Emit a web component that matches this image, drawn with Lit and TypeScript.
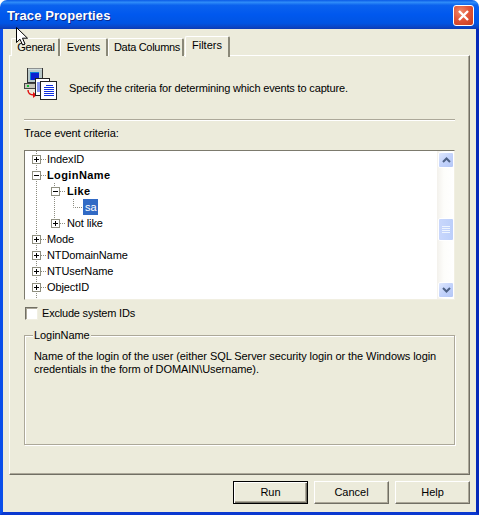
import { LitElement, html, css, svg } from "lit";
import { customElement } from "lit/decorators.js";

const FONT = css`"Liberation Sans", Arial, sans-serif`;

interface Row { depth: number; exp?: "+" | "-"; label: string; bold?: boolean; selected?: boolean; }
const ROWS: Row[] = [
  { depth: 0, exp: "+", label: "IndexID" },
  { depth: 0, exp: "-", label: "LoginName", bold: true },
  { depth: 1, exp: "-", label: "Like", bold: true },
  { depth: 2, label: "sa", selected: true },
  { depth: 1, exp: "+", label: "Not like" },
  { depth: 0, exp: "+", label: "Mode" },
  { depth: 0, exp: "+", label: "NTDomainName" },
  { depth: 0, exp: "+", label: "NTUserName" },
  { depth: 0, exp: "+", label: "ObjectID" },
];

@customElement("app-root")
export class AppRoot extends LitElement {
  static styles = css`
    :host { display: block; width: 479px; height: 515px; position: relative; overflow: hidden;
      font: 11px/13px ${FONT}; color: #000; }
    .win { width: 479px; height: 515px; display: flex; flex-direction: column; box-sizing: border-box; position: relative; }
    .title { height: 29px; flex: none; display: flex; align-items: center; justify-content: space-between;
      padding: 1px 7px 0 7px; box-sizing: border-box;
      background: linear-gradient(180deg,#0a5ae6 0,#2f8cf8 8%,#0b62ee 18%,#0058ee 50%,#0054e3 80%,#0a47c8 92%,#0b3bb5 100%);
      border-radius: 7px 7px 0 0; }
    .title span { color: #fff; font: bold 13px/16px ${FONT}; text-shadow: 1px 1px 0 #0a2a90; letter-spacing: .1px; margin-top: 2px; }
    .close { width: 21px; height: 21px; box-sizing: border-box; border: 1px solid #fff; border-radius: 3px;
      margin-right: -2px; display: flex; align-items: center; justify-content: center;
      background: radial-gradient(circle at 35% 30%, #f08a6a 0, #e2563a 45%, #c83a1c 100%); }
    .frame { flex: 1; min-height: 0; background: #ecebdb; padding: 7px 6px 0 6px;
      border-style: solid; border-width: 0 3px 3px 3px; border-color: #0a4eea #0428b8 #0a38d0 #0a4eea;
      display: flex; flex-direction: column; box-sizing: border-box; }
    .tabs { display: flex; align-items: flex-end; height: 20px; flex: none; padding-left: 2px; position: relative; z-index: 1; margin-bottom: -1px; }
    .tab { box-sizing: border-box; height: 18px; background: #ecebdb; display: flex; align-items: center; justify-content: center;
      border-top: 1px solid #fff; border-left: 1px solid #fff; border-right: 2px solid #8a8878; border-radius: 2px 2px 0 0; padding-bottom: 1px; }
    .tab.on { height: 21px; margin-left: 1px; margin-bottom: -1px; padding-bottom: 4px; }
    .t1 { width: 49px; letter-spacing: -.25px; padding-left: 2px; } .t2 { width: 48px; } .t3 { width: 76px; letter-spacing: -.3px; padding-left: 3px; } .t4 { width: 45px; }
    .panel { box-sizing: border-box; width: 461px; height: 420px; flex: none; border: 1px solid; border-color: #fff #716f64 #716f64 #fff;
      box-shadow: inset -1px -1px 0 #aca899; padding: 0 14px 0 14px; display: flex; flex-direction: column; }
    .head { height: 63px; flex: none; display: flex; align-items: center; gap: 11px; padding: 2px 0 0 0; box-sizing: border-box; }
    .head span { letter-spacing: -.16px; }
    .head svg { display: block; align-self: flex-start; margin-top: 9px; flex: none; }
    .sep { flex: none; background: #aca899; border-bottom: 1px solid #fff; height: 1px; }
    .lbl { margin-top: 6px; height: 13px; flex: none; letter-spacing: -.1px; }
    .treebox { margin-top: 10px; height: 150px; flex: none; box-sizing: border-box; border: 1px solid; border-color: #7c7a6d #f1efe2 #f1efe2 #7c7a6d;
      background: #fff; display: flex; position: relative; }
    .tree { flex: 1; min-width: 0; position: relative; overflow: hidden; }
    .lines { position: absolute; left: 0; top: 0; }
    .row { height: 16px; display: flex; align-items: center; position: relative; }
    .exp { width: 9px; height: 9px; flex: none; }
    .rowlabel { white-space: nowrap; padding: 0 2px; line-height: 16px; height: 16px; letter-spacing: -.1px; }
    .rowlabel.b { font-weight: 700; letter-spacing: .4px; }
    .rowlabel.sel { background: #316ac5; color: #fff; }
    .sb { width: 17px; flex: none; background: linear-gradient(90deg,#f3f1ec 0,#fdfdfa 40%,#fff 100%); display: flex; flex-direction: column;
      padding: 1px 0; box-sizing: border-box; }
    .sbbtn { height: 16px; flex: none; width: 16px; margin-left: 1px; box-sizing: border-box; border: 1px solid #fff; border-radius: 2px;
      background: linear-gradient(135deg,#dfe8fd 0,#c3d3fb 50%,#b3c6f6 100%); display: flex; align-items: center; justify-content: center; }
    .thumbtrack { flex: 1; min-height: 0; padding-top: 50px; box-sizing: border-box; }
    .thumb { height: 23px; width: 16px; margin-left: 1px; box-sizing: border-box; border: 1px solid #fff; border-radius: 2px;
      background: linear-gradient(90deg,#c9d7fc,#bccffa); display: flex; align-items: center; justify-content: center; }
    .chk { display: flex; align-items: center; gap: 4px; height: 14px; margin-top: 6px; flex: none; padding-left: 1px; letter-spacing: -.2px; }
    .box { width: 13px; height: 13px; box-sizing: border-box; background: #fff; border: 1px solid; border-color: #716f64 #f1efe2 #f1efe2 #716f64; box-shadow: inset 1px 1px 0 #aca899; }
    .group { position: relative; margin-top: 15px; height: 110px; box-sizing: border-box; flex: none; border: 1px solid #aca899; box-shadow: inset 1px 1px 0 #fff, 1px 1px 0 #fff;
      padding: 14px 9px 0 9px; letter-spacing: -.07px; }
    .legend { position: absolute; left: 8px; top: -7px; background: #ecebdb; padding: 0 1px; }
    .foot { flex: 1; display: flex; justify-content: flex-end; gap: 6px; padding: 6px 0 0 0; box-sizing: border-box; }
    .btn { width: 75px; height: 23px; box-sizing: border-box; background: #ecebdb; display: flex; align-items: center; justify-content: center;
      border: 1px solid; border-color: #fff #716f64 #716f64 #fff; box-shadow: inset -1px -1px 0 #aca899; }
    .btn.def { border: 1px solid #000; box-shadow: inset 1px 1px 0 #fff, inset -1px -1px 0 #716f64, inset -2px -2px 0 #aca899; }
    .cursor { position: absolute; left: 16px; top: 27px; pointer-events: none; z-index: 2; }
  `;

  private exp(kind: "+" | "-") {
    return html`<svg class="exp" width="9" height="9" viewBox="0 0 9 9">
      <rect x=".5" y=".5" width="8" height="8" fill="#fff" stroke="#8f8f80"/>
      <path d="M2 4.5H7" stroke="#000" fill="none"/>
      ${kind === "+" ? svg`<path d="M4.5 2V7" stroke="#000" fill="none"/>` : ""}
    </svg>`;
  }

  private row(r: Row) {
    const left = r.depth === 0 ? 7 : r.depth === 1 ? 26 : 58;
    const gap = r.depth === 2 ? 0 : r.depth === 1 ? 5 : 4;
    return html`<div class="row" style="padding-left:${left}px;gap:${gap}px">
      ${r.exp ? this.exp(r.exp) : ""}
      <span class="rowlabel ${r.bold ? "b" : ""} ${r.selected ? "sel" : ""}">${r.label}</span>
    </div>`;
  }

  render() {
    return html`<div class="win">
      <div class="title"><span>Trace Properties</span>
        <div class="close"><svg width="13" height="13" viewBox="0 0 13 13"><path d="M2 2L11 11M11 2L2 11" stroke="#fff" stroke-width="2.4" fill="none"/></svg></div>
      </div>
      <div class="frame">
        <div class="tabs">
          <div class="tab t1">General</div>
          <div class="tab t2">Events</div>
          <div class="tab t3">Data Columns</div>
          <div class="tab on t4">Filters</div>
        </div>
        <div class="panel">
          <div class="head">
            <svg width="34" height="34" viewBox="0 0 34 34">
              <rect x="3.5" y="1.5" width="15" height="14" fill="#b8c8c8" stroke="#333"/>
              <path d="M4 2h14" stroke="#e8f0f0" fill="none"/>
              <rect x="6" y="5" width="9" height="8" fill="#0a1fd0"/>
              <path d="M6 5h9v1H7v7H6z" fill="#0a7fd8"/>
              <rect x=".5" y="16.5" width="16" height="5" fill="#c8c6bc" stroke="#444"/>
              <rect x="3" y="18" width="2" height="2" fill="#10c030"/>
              <path d="M4 23c0 4 3 5 6 5" stroke="#e01010" stroke-width="1.4" fill="none"/>
              <path d="M9 25v6l4-3z" fill="#e01010"/>
              <rect x="11.5" y="11.5" width="14" height="17" fill="#fff" stroke="#222"/>
              <path d="M13 16h3M13 18h3M13 20h3M13 22h3M13 24h3" stroke="#1030e0" fill="none"/>
              <rect x="16.5" y="14.5" width="16" height="18" fill="#fff" stroke="#222"/>
              <path d="M22 18.5h7M20 20.5h10M20 22.5h10M20 24.5h10M20 26.5h10M20 28.5h10" stroke="#1030e0" fill="none"/>
            </svg>
            <span>Specify the criteria for determining which events to capture.</span>
          </div>
          <div class="sep"></div>
          <div class="lbl">Trace event criteria:</div>
          <div class="treebox">
            <div class="tree">
              <svg class="lines" width="100" height="148">
                <g stroke="#8c8c80" stroke-dasharray="1 1" fill="none">
                  <path d="M11.5 0V148"/>
                  <path d="M29.5 32V72"/>
                  <path d="M48.5 48V56.5H58"/>
                  <path d="M16 8.5H21M16 24.5H21M16 88.5H21M16 104.5H21M16 120.5H21M16 136.5H21"/>
                  <path d="M35 40.5H40M35 72.5H40"/>
                </g>
              </svg>
              ${ROWS.map((r) => this.row(r))}
            </div>
            <div class="sb">
              <div class="sbbtn"><svg width="9" height="6" viewBox="0 0 9 6"><path d="M1 5L4.5 1.5L8 5" stroke="#4d6185" stroke-width="2" fill="none"/></svg></div>
              <div class="thumbtrack"><div class="thumb"><svg width="8" height="8" viewBox="0 0 8 8"><path d="M0 .5H8M0 2.5H8M0 4.5H8M0 6.5H8" stroke="#eef4fe" fill="none"/></svg></div></div>
              <div class="sbbtn"><svg width="9" height="6" viewBox="0 0 9 6"><path d="M1 1L4.5 4.5L8 1" stroke="#4d6185" stroke-width="2" fill="none"/></svg></div>
            </div>
          </div>
          <div class="chk"><div class="box"></div><span>Exclude system IDs</span></div>
          <div class="group">
            <div class="legend">LoginName</div>
            Name of the login of the user (either SQL Server security login or the Windows login credentials in the form of DOMAIN\\Username).
          </div>
        </div>
        <div class="foot">
          <div class="btn def">Run</div>
          <div class="btn">Cancel</div>
          <div class="btn">Help</div>
        </div>
      </div>
      <svg class="cursor" width="13" height="19" viewBox="0 0 13 19">
        <path d="M.5.5V15.5L4 12.2L6.6 18L9 17L6.5 11.2H11.5Z" fill="#fff" stroke="#000"/>
      </svg>
    </div>`;
  }
}
